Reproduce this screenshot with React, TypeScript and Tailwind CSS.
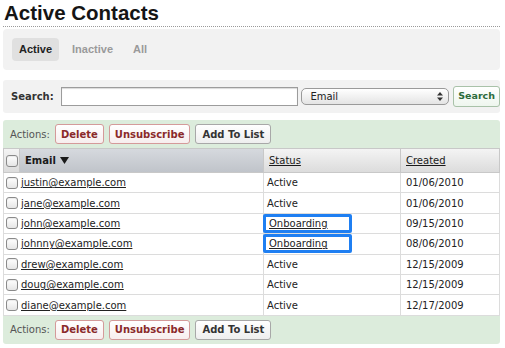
import React from "react"

const rows = [
  { email: "justin@example.com", status: "Active", created: "01/06/2010" },
  { email: "jane@example.com", status: "Active", created: "01/06/2010" },
  { email: "john@example.com", status: "Onboarding", created: "09/15/2010" },
  { email: "johnny@example.com", status: "Onboarding", created: "08/06/2010" },
  { email: "drew@example.com", status: "Active", created: "12/15/2009" },
  { email: "doug@example.com", status: "Active", created: "12/15/2009" },
  { email: "diane@example.com", status: "Active", created: "12/17/2009" },
]

function Box() {
  return (
    <span className="block w-[12px] h-[12px] rounded-[3px] border border-[#8a8a8a] bg-gradient-to-b from-white to-[#e6e6e6] shadow-[inset_0_1px_1px_rgba(0,0,0,0.08)]" />
  )
}

function ActionBar({ rounded }: { rounded: string }) {
  return (
    <div className={`flex items-center h-[28px] pl-[7px] gap-[5px] bg-[#dcecdc] ${rounded}`}>
      <span className="text-[10px] text-[#555]">Actions:</span>
      <button className="h-[20px] px-[5px] rounded-[3px] border border-[#d49a9a] bg-gradient-to-b from-white to-[#f7eeee] text-[10px] font-bold text-[#8a2a2a]">
        Delete
      </button>
      <button className="h-[20px] px-[5px] rounded-[3px] border border-[#d49a9a] bg-gradient-to-b from-white to-[#f7eeee] text-[10px] font-bold text-[#8a2a2a]">
        Unsubscribe
      </button>
      <button className="h-[20px] px-[6px] rounded-[3px] border border-[#a8a8a8] bg-gradient-to-b from-white to-[#eeeeee] text-[10px] font-bold text-[#333]">
        Add To List
      </button>
    </div>
  )
}

export default function App() {
  return (
    <div className="w-[505px] h-[348px] bg-white pl-[3px] pr-[5px] font-['DejaVu_Sans',sans-serif] text-[#222] overflow-hidden">
      {/* Title */}
      <div className="h-[27px] border-b border-dotted border-[#9a9a9a] pl-[1px] pt-[1px]">
        <h1 className="font-['Liberation_Sans',Arial,sans-serif] font-bold text-[20.5px] leading-[24px] text-[#151515]">
          Active Contacts
        </h1>
      </div>

      {/* Tabs */}
      <div className="mt-[2px] h-[41px] rounded-[4px] bg-[#f2f2f2] flex items-center pl-[9px] gap-[6px] font-['Liberation_Sans',Arial,sans-serif]">
        <span className="h-[23px] px-[7px] rounded-[4px] bg-[#e0e0e0] flex items-center text-[11px] font-bold text-[#222]">
          Active
        </span>
        <span className="h-[23px] px-[7px] flex items-center text-[11px] font-bold text-[#9a9a9a]">Inactive</span>
        <span className="h-[23px] px-[7px] flex items-center text-[11px] font-bold text-[#9a9a9a]">All</span>
      </div>

      {/* Search */}
      <div className="mt-[10px] h-[33px] rounded-[3px] bg-[#f2f2f2] flex items-center pl-[8px]">
        <span className="text-[10px] font-bold text-[#333]">Search:</span>
        <input className="ml-[7px] w-[238px] h-[19px] bg-white border border-[#9c9c9c] shadow-[inset_0_1px_1px_rgba(0,0,0,0.15)] outline-none" />
        <div className="ml-[3px] w-[148px] h-[17px] rounded-[5px] border border-[#9a9a9a] bg-gradient-to-b from-white to-[#e4e4e4] flex items-center pl-[8px] pr-[4px]">
          <span className="flex-1 text-[10px] text-[#222]">Email</span>
          <svg width="8" height="11" viewBox="0 0 8 11">
            <path d="M4 1 L7 4.5 H1 Z" fill="#333" />
            <path d="M4 10 L7 6.5 H1 Z" fill="#333" />
          </svg>
        </div>
        <button className="ml-[4px] h-[21px] px-[4px] rounded-[3px] border border-[#a9c2a9] bg-gradient-to-b from-white to-[#eef6ee] text-[9.5px] font-bold text-[#2d6b3c]">
          Search
        </button>
      </div>

      {/* Actions top */}
      <div className="mt-[7px]">
        <ActionBar rounded="rounded-t-[3px]" />

        {/* Header */}
        <div className="flex h-[25px] border border-[#c8c8c8] text-[10px]">
          <div className="w-[16px] flex items-center justify-center bg-gradient-to-b from-[#f4f4f4] to-[#dcdcdc] border-r border-[#c8c8c8]">
            <Box />
          </div>
          <div className="w-[243px] flex items-center pl-[5px] bg-gradient-to-b from-[#d6d9de] to-[#c0c4ca] font-bold text-[#1a1a1a]">
            Email
            <svg className="ml-[4px]" width="9" height="7" viewBox="0 0 9 7">
              <path d="M0 0 H9 L4.5 7 Z" fill="#1a1a1a" />
            </svg>
          </div>
          <div className="w-[137px] flex items-center pl-[5px] bg-gradient-to-b from-[#f4f4f4] to-[#dcdcdc] border-l border-[#c8c8c8] underline text-[#1a1a1a]">
            Status
          </div>
          <div className="flex-1 flex items-center pl-[5px] bg-gradient-to-b from-[#f4f4f4] to-[#dcdcdc] border-l border-[#c8c8c8] underline text-[#1a1a1a]">
            Created
          </div>
        </div>

        {/* Rows */}
        {rows.map((r) => (
          <div key={r.email} className="flex h-[20.4px] border-b border-x border-[#dcdcdc] text-[10px]">
            <div className="w-[16px] flex items-center justify-center">
              <Box />
            </div>
            <div className="w-[243px] flex items-center pl-[1px]">
              <a href="#" className="underline text-[#222]">
                {r.email}
              </a>
            </div>
            <div className="w-[137px] flex items-center border-l border-[#dcdcdc]">
              {r.status === "Onboarding" ? (
                <span className="w-[89px] h-[19px] -ml-[1px] flex items-center pl-[3px] border-[3px] border-[#1f7ff2] rounded-[2px] bg-white underline text-[#222]">
                  {r.status}
                </span>
              ) : (
                <span className="pl-[3px] text-[#222]">{r.status}</span>
              )}
            </div>
            <div className="flex-1 flex items-center pl-[5px] border-l border-[#dcdcdc] text-[#222]">{r.created}</div>
          </div>
        ))}

        <ActionBar rounded="rounded-b-[3px]" />
      </div>
    </div>
  )
}
